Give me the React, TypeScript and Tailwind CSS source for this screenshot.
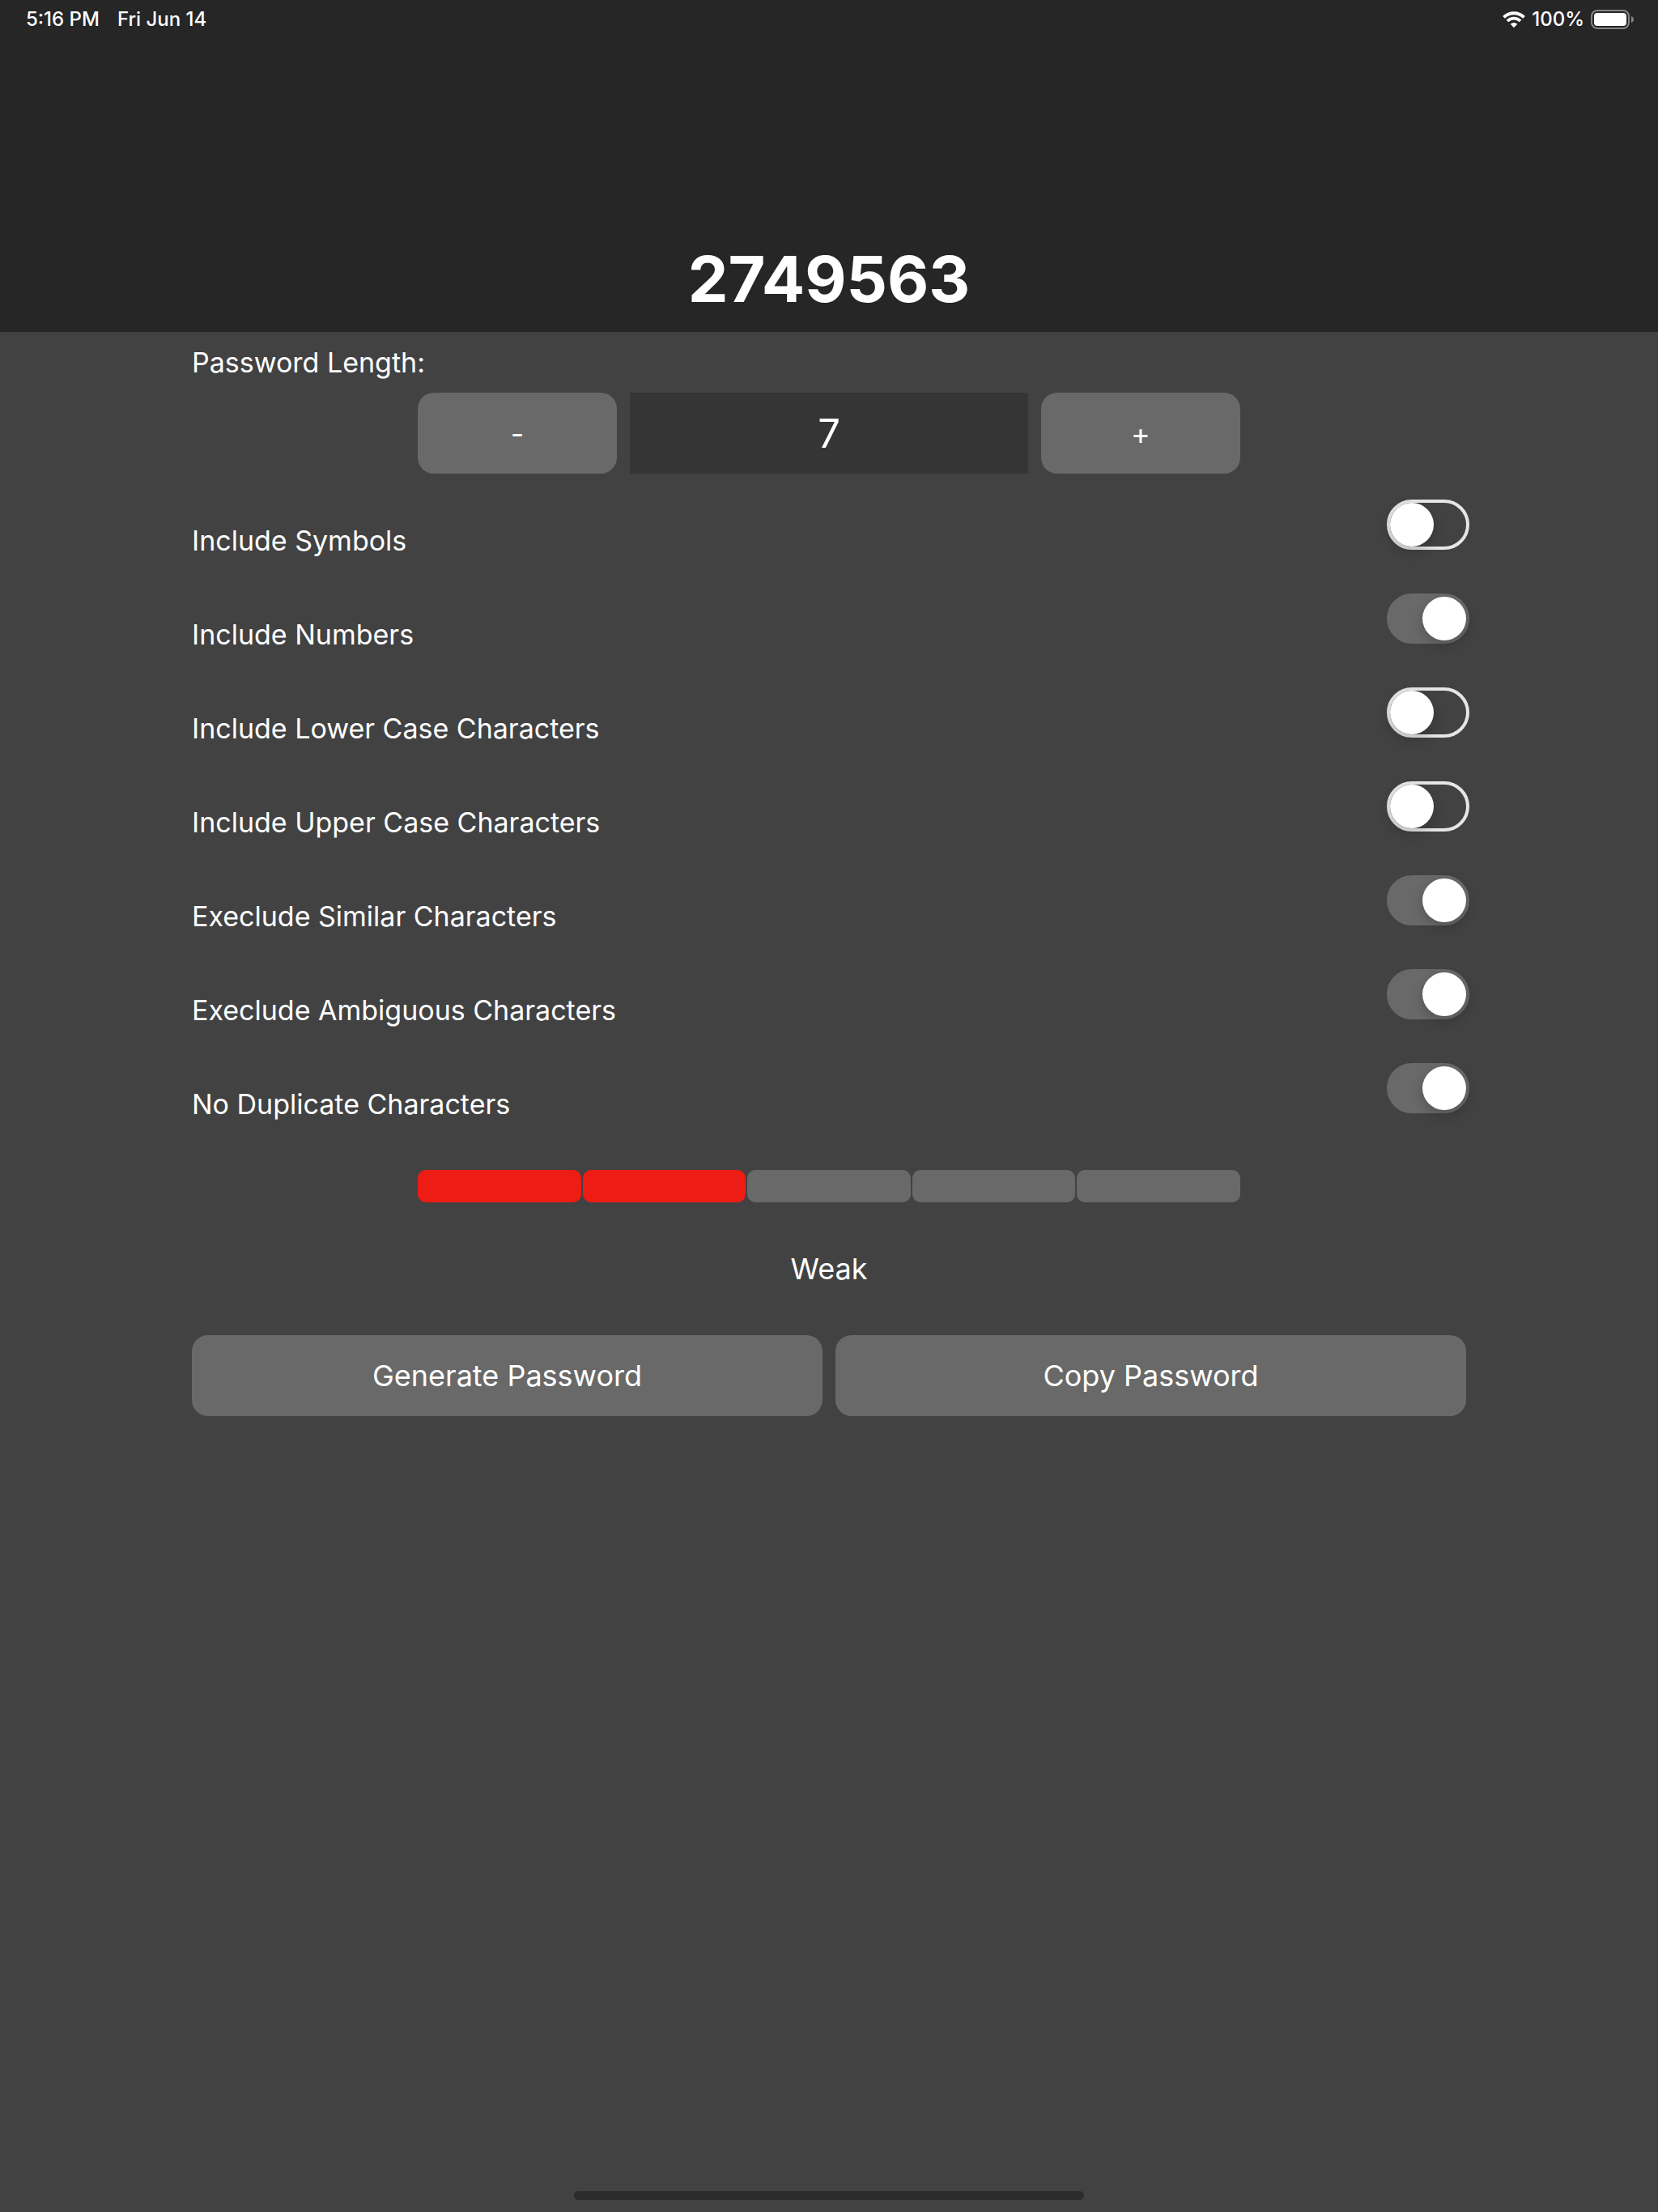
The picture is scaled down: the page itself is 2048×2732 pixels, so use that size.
import { useState } from "react";

const OPTIONS = [
  { id: "symbols", label: "Include Symbols", on: false },
  { id: "numbers", label: "Include Numbers", on: true },
  { id: "lower", label: "Include Lower Case Characters", on: false },
  { id: "upper", label: "Include Upper Case Characters", on: false },
  { id: "similar", label: "Execlude Similar Characters", on: true },
  { id: "ambiguous", label: "Execlude Ambiguous Characters", on: true },
  { id: "duplicate", label: "No Duplicate Characters", on: true },
];

const STRENGTH = [true, true, false, false, false];

function WifiIcon() {
  return (
    <svg className="h-5 w-7" viewBox="0 0 28 20" fill="none" aria-label="Wi-Fi" role="img">
      <path d="M1.500 7.300a17.800 17.800 0 0 1 25 0" stroke="white" strokeWidth="4" />
      <path d="M6 12a11.400 11.400 0 0 1 16 0" stroke="white" strokeWidth="3.800" />
      <path d="M14 20.200l-4.300-4.400a6.200 6.200 0 0 1 8.600 0z" fill="white" />
    </svg>
  );
}

function BatteryIcon() {
  return (
    <svg className="h-6 w-[53px]" viewBox="0 0 53 24" fill="none" aria-label="Battery full" role="img">
      <rect x="1" y="1" width="46" height="22" rx="7" stroke="#858585" strokeWidth="2" />
      <rect x="4" y="4" width="40" height="16" rx="4" fill="white" />
      <path d="M50 8c4 1.300 4 6.700 0 8z" fill="#858585" />
    </svg>
  );
}

function StatusBar() {
  return (
    <div className="flex h-12 items-center justify-between pr-[30px] pl-8 text-[24px] leading-7 font-medium">
      <div className="flex gap-[22px]">
        <span>5:16 PM</span>
        <span>Fri Jun 14</span>
      </div>
      <div className="flex items-center gap-2">
        <WifiIcon />
        <span>100%</span>
        <BatteryIcon />
      </div>
    </div>
  );
}

function Toggle({ id, label, on }: { id: string; label: string; on: boolean }) {
  const [checked, setChecked] = useState(on);
  return (
    <div className="flex h-[116px] items-start justify-between">
      <label htmlFor={id} className="text-[34px] leading-[102px]">
        {label}
      </label>
      <input
        id={id}
        type="checkbox"
        role="switch"
        checked={checked}
        onChange={(e) => setChecked(e.target.checked)}
        className="-mr-1 h-[62px] w-[102px] shrink-0 appearance-none rounded-full border-4 border-[#e6e6e6] before:block before:size-[54px] before:rounded-full before:bg-white before:shadow-[0_6px_16px_rgba(0,0,0,0.2)] checked:border-[#696969] checked:bg-[#696969] checked:before:ml-10"
      />
    </div>
  );
}

export default function App() {
  const [length, setLength] = useState(7);
  return (
    <div className="flex min-h-screen flex-col bg-[#424242] font-['Inter',sans-serif] text-white">
      <header className="flex h-[410px] flex-col justify-between bg-[#262626]">
        <StatusBar />
        <output className="pb-[18px] text-center text-[79px] leading-[96px] font-bold">2749563</output>
      </header>

      <main className="mx-auto flex w-full max-w-[1574px] flex-col">
        <label htmlFor="length" className="h-[75px] text-[34px] leading-[75px]">
          Password Length:
        </label>
        <div className="mx-auto grid w-full max-w-[1016px] grid-cols-[1fr_2fr_1fr] gap-4">
          <button
            type="button"
            aria-label="Decrease length"
            onClick={() => setLength(Math.max(1, length - 1))}
            className="h-[100px] rounded-[20px] bg-[#696969] pt-0.5 text-[36px]"
          >
            -
          </button>
          <input
            id="length"
            type="text"
            readOnly
            value={length}
            className="h-[100px] w-full min-w-0 bg-[#353535] text-center text-[49px]"
          />
          <button
            type="button"
            aria-label="Increase length"
            onClick={() => setLength(length + 1)}
            className="h-[100px] rounded-[20px] bg-[#696969] pt-0.5 text-[36px]"
          >
            +
          </button>
        </div>

        <div className="pt-8">
          {OPTIONS.map((o) => (
            <Toggle key={o.id} id={o.id} label={o.label} on={o.on} />
          ))}
        </div>

        <div className="mx-auto mt-4 grid w-full max-w-[1016px] grid-cols-5 gap-0.5">
          {STRENGTH.map((filled, i) => (
            <div key={i} className={filled ? "h-10 rounded-[10px] bg-[#ed1c14]" : "h-10 rounded-[10px] bg-[#696969]"} />
          ))}
        </div>
        <p className="py-14 text-center text-[36px] leading-[52px]">Weak</p>

        <div className="grid grid-cols-2 gap-4">
          <button type="button" className="h-[100px] rounded-[20px] bg-[#696969] text-[36px]">
            Generate Password
          </button>
          <button type="button" className="h-[100px] rounded-[20px] bg-[#696969] text-[36px]">
            Copy Password
          </button>
        </div>
      </main>

      <div className="mx-auto mt-auto mb-[15px] h-[11px] w-full max-w-[630px] rounded-full bg-[#2c2c2c]" />
    </div>
  );
}
